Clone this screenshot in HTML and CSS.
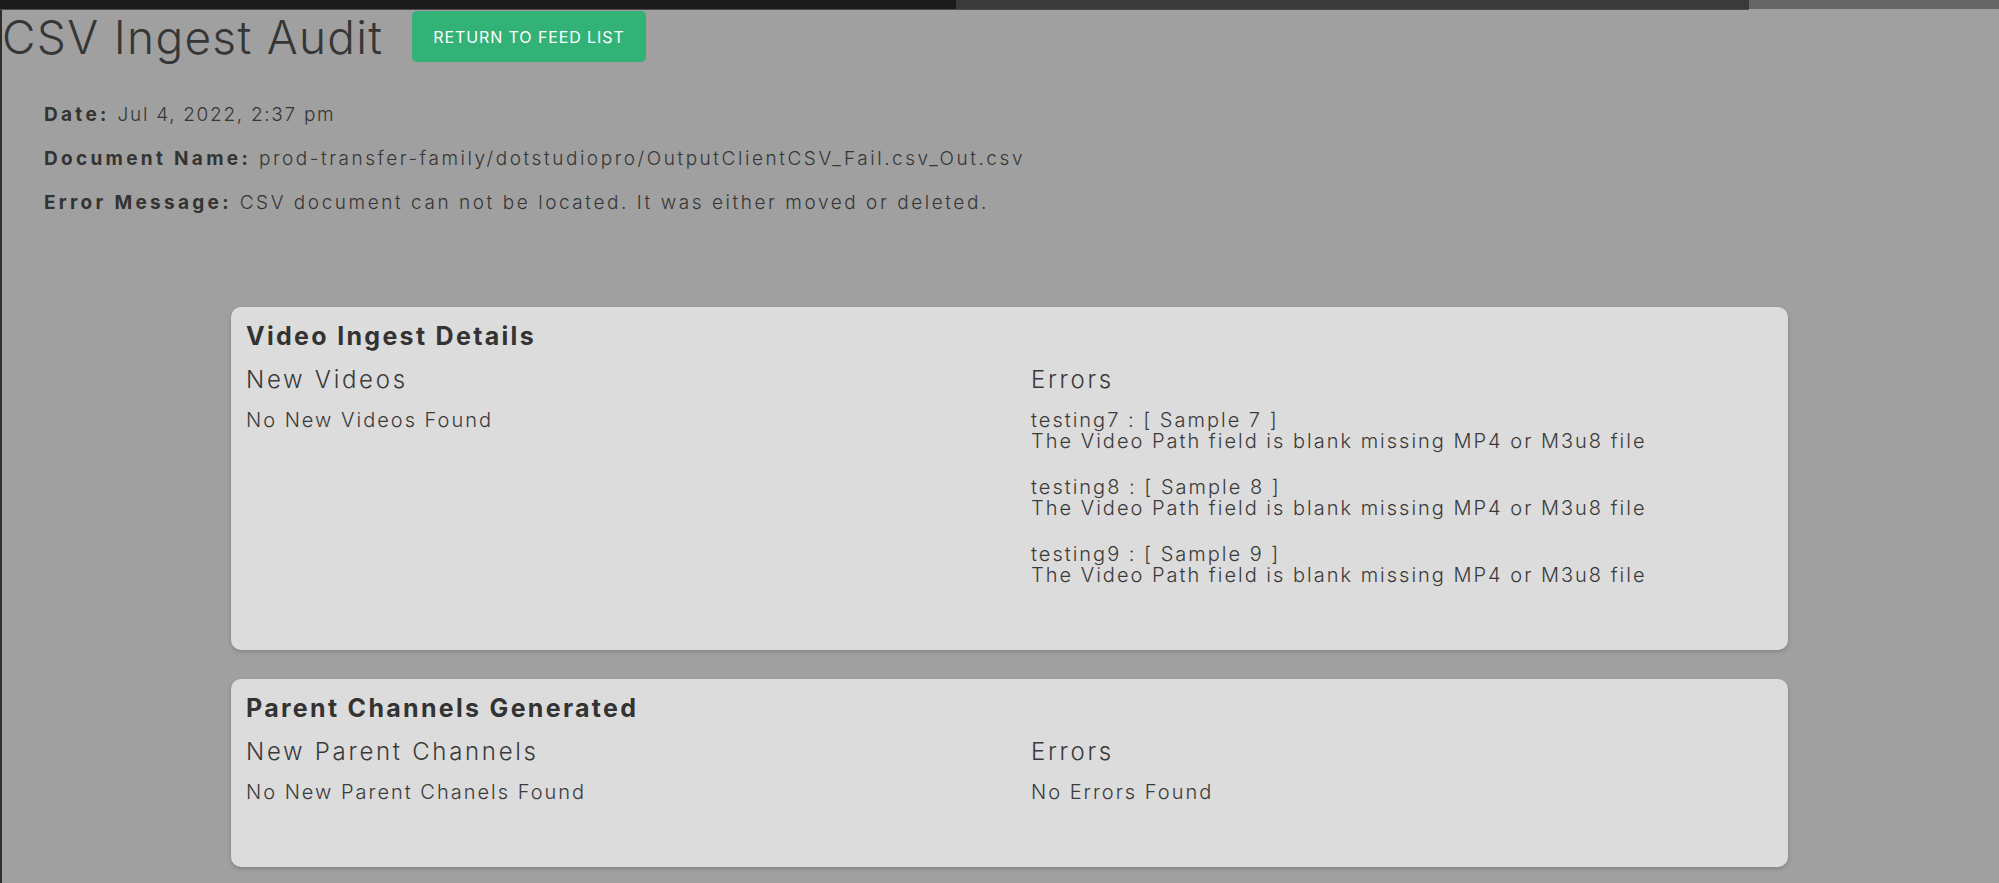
FILE: index.html
```html
<!DOCTYPE html>
<html lang="en">
<head>
<meta charset="utf-8">
<title>CSV Ingest Audit</title>
<link rel="stylesheet" href="styles.css">
</head>
<body>
<div class="topbar">
  <span class="seg seg-a"></span>
  <span class="seg seg-b"></span>
  <span class="seg seg-c"></span>
</div>
<main class="page">
  <header class="page-head">
    <h1 class="page-title">CSV Ingest Audit</h1>
    <button class="btn-return" type="button">RETURN TO FEED LIST</button>
  </header>

  <section class="meta">
    <p class="meta-line"><strong>Date:</strong> <span class="meta-date">Jul 4, 2022, 2:37 pm</span></p>
    <p class="meta-line"><strong>Document Name:</strong> prod-transfer-family/dotstudiopro/OutputClientCSV_Fail.csv_Out.csv</p>
    <p class="meta-line"><strong>Error Message:</strong> CSV document can not be located. It was either moved or deleted.</p>
  </section>

  <section class="cards">
    <div class="card">
      <h2 class="card-title">Video Ingest Details</h2>
      <div class="card-cols">
        <div class="col">
          <h3 class="col-title">New Videos</h3>
          <p class="col-text">No New Videos Found</p>
        </div>
        <div class="col">
          <h3 class="col-title">Errors</h3>
          <div class="col-text err">
            <div>testing7 : [ Sample 7 ]</div>
            <div>The Video Path field is blank missing MP4 or M3u8 file</div>
          </div>
          <div class="col-text err">
            <div>testing8 : [ Sample 8 ]</div>
            <div>The Video Path field is blank missing MP4 or M3u8 file</div>
          </div>
          <div class="col-text err">
            <div>testing9 : [ Sample 9 ]</div>
            <div>The Video Path field is blank missing MP4 or M3u8 file</div>
          </div>
        </div>
      </div>
    </div>

    <div class="card">
      <h2 class="card-title">Parent Channels Generated</h2>
      <div class="card-cols">
        <div class="col">
          <h3 class="col-title">New Parent Channels</h3>
          <p class="col-text">No New Parent Chanels Found</p>
        </div>
        <div class="col">
          <h3 class="col-title">Errors</h3>
          <p class="col-text">No Errors Found</p>
        </div>
      </div>
    </div>
  </section>
</main>
</body>
</html>
```

FILE: styles.css
```css
html, body {
  margin: 0;
  padding: 0;
}

body {
  background: #a0a0a0;
  color: #393939;
  font-family: "Inter", "Open Sans", "DejaVu Sans", sans-serif;
  overflow: hidden;
}

.topbar {
  display: flex;
  height: 10px;
}

.seg {
  display: block;
  height: 9px;
}

.seg-a {
  width: 956px;
  background: #1b1b1b;
  border-bottom: 1px solid #4c4c4c;
}

.seg-b {
  width: 793px;
  background: #3a3a3a;
  border-bottom: 1px solid #4c4c4c;
}

.seg-c {
  flex: 1;
  background: #666666;
}

.page {
  border-left: 2px solid #2e2e2e;
  min-height: 873px;
  box-sizing: border-box;
}

.page-head {
  display: flex;
  align-items: center;
  height: 52px;
  padding-top: 1px;
  box-sizing: border-box;
}

.page-title {
  margin: 0;
  font-size: 46px;
  font-weight: 300;
  line-height: 1;
  color: #363636;
  letter-spacing: 1.3px;
  width: 410px;
  white-space: nowrap;
}

.btn-return {
  width: 234px;
  height: 51px;
  border: none;
  border-radius: 5px;
  background: #33b277;
  color: #ffffff;
  font-family: inherit;
  font-size: 16px;
  font-weight: 400;
  letter-spacing: 0.9px;
  padding: 0;
}

.meta {
  padding: 31px 0 0 42px;
}

.meta-line {
  margin: 0;
  font-size: 19px;
  line-height: 44px;
  letter-spacing: 2.55px;
  font-weight: 300;
  color: #363636;
}

.meta-line strong {
  font-weight: 700;
  letter-spacing: 3.3px;
  color: #333333;
}

.meta-date {
  letter-spacing: 1.7px;
}

.cards {
  padding: 82px 0 0 229px;
  display: flex;
  flex-direction: column;
  gap: 29px;
}

.card {
  width: 1557px;
  box-sizing: border-box;
  background: #dcdcdc;
  border-radius: 10px;
  box-shadow: 0 2px 4px rgba(0, 0, 0, 0.18);
  padding: 14px 15px 39px 15px;
}

.card-title {
  margin: 0;
  font-size: 25px;
  font-weight: 700;
  line-height: 30px;
  letter-spacing: 2.3px;
  color: #333333;
}

.card-cols {
  display: grid;
  grid-template-columns: 785px 1fr;
  margin-top: 14px;
}

.col-title {
  margin: 0 0 15px 0;
  font-size: 24px;
  font-weight: 300;
  line-height: 30px;
  letter-spacing: 2.7px;
  color: #393939;
}

.col-text {
  margin: 0 0 25px 0;
  font-size: 20px;
  font-weight: 300;
  line-height: 21px;
  letter-spacing: 2px;
  color: #3a3a3a;
}
```
